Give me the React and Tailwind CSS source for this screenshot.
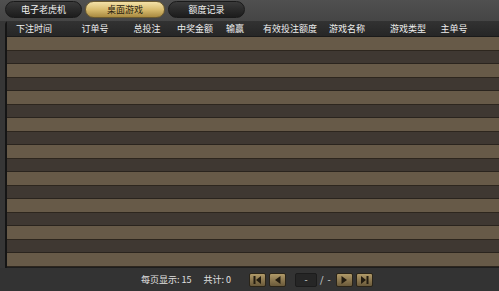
const cols = [
  { label: "下注时间", ml: "ml-[25px]" },
  { label: "订单号", ml: "ml-[61px]" },
  { label: "总投注", ml: "ml-[52px]" },
  { label: "中奖金额", ml: "ml-[48px]" },
  { label: "输赢", ml: "ml-[40px]" },
  { label: "有效投注额度", ml: "ml-[55px]" },
  { label: "游戏名称", ml: "ml-[57px]" },
  { label: "游戏类型", ml: "ml-[61px]" },
  { label: "主单号", ml: "ml-[46px]" },
];

const tabs = [
  { label: "电子老虎机", active: false },
  { label: "桌面游戏", active: true },
  { label: "额度记录", active: false },
];

function PagerButton({ dir, bar }) {
  return (
    <button className="w-[17px] h-[14px] flex items-center justify-center rounded-[2px] border border-[#2a2418] bg-gradient-to-b from-[#b09a68] via-[#8c7850] to-[#6a5a3a]">
      <svg width="9" height="8" viewBox="0 0 9 8">
        {dir === "left" ? (
          <>
            {bar && <rect x="0.5" y="0" width="2" height="8" fill="#231c10" />}
            <polygon points={bar ? "8,0 8,8 3,4" : "7.5,0 7.5,8 2,4"} fill="#231c10" />
          </>
        ) : (
          <>
            <polygon points={bar ? "1,0 1,8 6,4" : "1.5,0 1.5,8 7,4"} fill="#231c10" />
            {bar && <rect x="6.5" y="0" width="2" height="8" fill="#231c10" />}
          </>
        )}
      </svg>
    </button>
  );
}

export default function App() {
  const rows = Array.from({ length: 17 });

  return (
    <div
      className="w-[499px] h-[291px] flex flex-col bg-[#363636] overflow-hidden text-[#e6e6e6]"
      style={{ fontFamily: '"Noto Sans CJK SC", "Noto Sans", sans-serif' }}
    >
      {/* tabs */}
      <div className="h-[21px] flex items-start gap-[3px] pl-[5px] pt-[1px] bg-gradient-to-b from-[#505050] to-[#454545]">
        {tabs.map((t) => (
          <div
            key={t.label}
            className={
              t.active
                ? "w-[80px] h-[17px] rounded-full flex items-center justify-center text-[9px] text-[#2a2210] border border-[#6b5a30] bg-gradient-to-b from-[#f4e2a8] via-[#d9bd70] to-[#a98a40]"
                : "w-[77px] h-[17px] rounded-full flex items-center justify-center text-[9px] text-[#f0f0f0] border border-[#1a1a1a] bg-gradient-to-b from-[#3a3a3a] to-[#1c1c1c]"
            }
          >
            {t.label}
          </div>
        ))}
      </div>

      {/* table */}
      <div className="flex-1 flex flex-col ml-[5px] border-l-2 border-[#151515] rounded-tl-[4px] bg-[#1e1e1e]">
        <div className="h-[16px] flex items-center bg-gradient-to-b from-[#323232] to-[#262626] border-b border-[#1a1a1a] pl-[2px]">
          {cols.map((c) => (
            <div key={c.label} className={`${c.ml} w-0 flex justify-center whitespace-nowrap text-[9px] leading-none text-[#eeeeee]`}>
              {c.label}
            </div>
          ))}
        </div>
        <div className="flex-1 flex flex-col">
          {rows.map((_, i) => (
            <div
              key={i}
              className={
                i % 2 === 0
                  ? "h-[13.5px] bg-[#675a48] border-b border-[#2d261e]"
                  : "h-[13.5px] bg-[#3f3832] border-b border-[#2a241e]"
              }
            />
          ))}
        </div>
      </div>

      {/* footer */}
      <div className="h-[23px] flex items-center bg-[#333333] text-[9px] text-[#e0e0e0]">
        <span className="ml-[141px]">每页显示: 15</span>
        <span className="ml-[12px]">共计: 0</span>
        <div className="ml-[18px] flex items-center gap-[3px]">
          <PagerButton dir="left" bar />
          <PagerButton dir="left" />
        </div>
        <div className="ml-[9px] w-[22px] h-[14px] bg-[#262626] border border-[#1c1c1c] rounded-[2px] flex items-center justify-center leading-none">
          -
        </div>
        <span className="ml-[3px]">/</span>
        <span className="ml-[4px]">-</span>
        <div className="ml-[5px] flex items-center gap-[3px]">
          <PagerButton dir="right" />
          <PagerButton dir="right" bar />
        </div>
      </div>
    </div>
  );
}
